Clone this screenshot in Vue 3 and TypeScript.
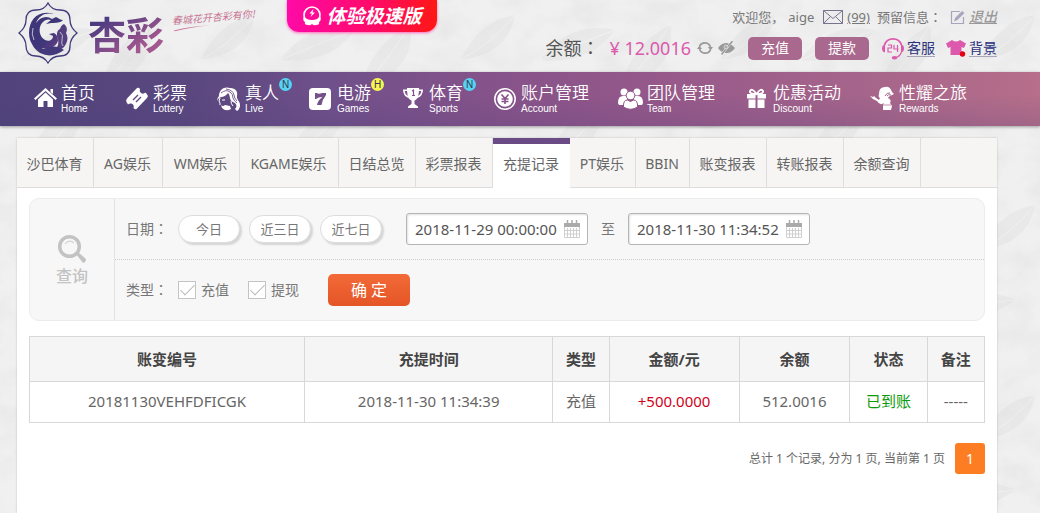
<script setup lang="ts">
import { ref } from 'vue'

interface NavItem {
  icon: string
  label: string
  sub: string
  badge?: 'N' | 'H'
}

const navItems: NavItem[] = [
  { icon: 'home', label: '首页', sub: 'Home' },
  { icon: 'lottery', label: '彩票', sub: 'Lottery' },
  { icon: 'live', label: '真人', sub: 'Live', badge: 'N' },
  { icon: 'games', label: '电游', sub: 'Games', badge: 'H' },
  { icon: 'sports', label: '体育', sub: 'Sports', badge: 'N' },
  { icon: 'account', label: '账户管理', sub: 'Account' },
  { icon: 'team', label: '团队管理', sub: 'Team' },
  { icon: 'discount', label: '优惠活动', sub: 'Discount' },
  { icon: 'rewards', label: '性耀之旅', sub: 'Rewards' },
]

const tabs: string[] = [
  '沙巴体育', 'AG娱乐', 'WM娱乐', 'KGAME娱乐', '日结总览', '彩票报表',
  '充提记录', 'PT娱乐', 'BBIN', '账变报表', '转账报表', '余额查询',
]
const activeTab = ref('充提记录')

const ranges: string[] = ['今日', '近三日', '近七日']
const startDate = ref('2018-11-29 00:00:00')
const endDate = ref('2018-11-30 11:34:52')
const deposit = ref(true)
const withdraw = ref(true)

const columns: string[] = ['账变编号', '充提时间', '类型', '金额/元', '余额', '状态', '备注']
const records = [
  {
    id: '20181130VEHFDFICGK',
    time: '2018-11-30 11:34:39',
    type: '充值',
    amount: '+500.0000',
    balance: '512.0016',
    status: '已到账',
    note: '-----',
  },
]
</script>

<template>
  <div class="page">
    <svg class="texture" aria-hidden="true">
      <defs>
        <filter id="grain" x="0" y="0" width="100%" height="100%">
          <feTurbulence type="fractalNoise" baseFrequency="0.03 0.04" numOctaves="4" seed="8" />
          <feColorMatrix values="0 0 0 0 0.7  0 0 0 0 0.7  0 0 0 0 0.7  0.7 0 0 0 -0.26" />
        </filter>
        <pattern id="leaves" width="260" height="190" patternUnits="userSpaceOnUse">
          <g fill="#e2e2e2" opacity="0.5">
            <path d="M20 60 Q50 20 95 30 Q70 65 20 60Z" />
            <path d="M100 90 Q110 45 150 25 Q158 70 100 90Z" />
            <path d="M150 120 Q190 90 235 110 Q195 140 150 120Z" />
            <path d="M30 160 Q40 115 85 110 Q78 150 30 160Z" />
            <path d="M200 60 Q220 20 255 15 Q248 55 200 60Z" />
          </g>
          <path d="M20 60 Q55 45 95 30 M100 90 Q125 65 150 25 M150 120 Q190 115 235 110 M30 160 Q55 140 85 110 M200 60 Q230 45 255 15" stroke="#f6f6f6" fill="none" opacity="0.7" />
        </pattern>
      </defs>
      <rect width="100%" height="100%" fill="url(#leaves)" />
      <rect width="100%" height="100%" filter="url(#grain)" />
    </svg>

    <header class="header">
      <a class="brand" href="#" aria-label="杏彩">
        <svg class="emblem" viewBox="0 0 60 62">
          <defs>
            <linearGradient id="emblemFill" x1="0" y1="0" x2="1" y2="1">
              <stop offset="0" stop-color="#3c3678" />
              <stop offset="0.6" stop-color="#40367a" />
              <stop offset="1" stop-color="#80458a" />
            </linearGradient>
          </defs>
          <path
            d="M30 1C33 7 38 8 42 8C49 8 52 12 52 18C52 23 54 27 59 31C54 35 52 39 52 44C52 50 49 54 42 54C38 54 33 56 30 61C27 56 22 54 18 54C11 54 8 50 8 44C8 39 6 35 1 31C6 27 8 23 8 18C8 12 11 8 18 8C22 8 27 7 30 1Z"
            fill="none" stroke="#413a7b" stroke-width="1.3" />
          <path
            d="M36 12C20 7 11 18 11 31C11 43 20 52 31 51C27 49 25 48 24 46C33 48 38 44 40 39C40 35 39 33 36 31L31 32L35 34C35 38 31 40 27 38C21 35 20 26 24 21C27 17 31 17 33 18L28 22C35 20 42 22 45 18C42 18 41 16 38 15L34 17C29 13 22 15 18 21C21 13 28 10 36 12Z"
            fill="url(#emblemFill)" />
          <path d="M46 22C50 25 49 29 48 31C51 36 49 42 45 46C42 48 39 48 37 48C40 45 41 41 40 37C38 33 39 28 42 27C43 24 44 23 46 22Z" fill="#54407f" />
          <path d="M14 42Q20 50 31 45Q39 43 46 48Q34 57 22 51Q17 48 14 42Z" fill="#443a7b" />
          <path d="M42 30Q46 33 44 38Q43 42 45 44M15 26Q13 32 16 38" stroke="#ddd8e6" stroke-width=".8" fill="none" />
        </svg>
        <span class="brand-name">杏彩</span>
        <span class="slogan">
          <span>春城花开杏彩有你!</span>
          <svg viewBox="0 0 40 4"><path d="M1 3Q18 0 39 1Q18 1 1 4Z" fill="#cc7798" /></svg>
        </span>
      </a>

      <a class="promo" href="#">
        <svg viewBox="0 0 20 20">
          <circle cx="10" cy="9" r="8" fill="none" stroke="#fff" stroke-width="1.6" />
          <path d="M2 10Q4 14 10 14Q16 14 18 10Q20 14 17 16Q18 19 14 19Q12 20 10 18Q8 20 6 19Q2 19 3 16Q0 14 2 10Z" fill="#fff" />
          <path d="M11.500 3L7.500 7.500H10L8.500 11L13 6.500H10.500Z" fill="#fff" />
        </svg>
        <span>体验极速版</span>
      </a>

      <div class="account">
        <div class="account-row welcome">
          <span>欢迎您，</span>
          <span class="user">aige</span>
          <a class="mail" href="#">
            <svg viewBox="0 0 20 14" fill="none" stroke="#7a7390">
              <path d="M.5.5H19.5V13.5H.5ZM.5.5L10 8.5L19.5.5M.5 13.5L7.5 6.5M19.5 13.5L12.5 6.5" />
            </svg>
            <u>(99)</u>
          </a>
          <span class="message">预留信息<span class="colon">：</span></span>
          <button class="icon-button" type="button" aria-label="编辑">
            <svg class="edit" viewBox="0 0 15 15">
              <path d="M10 1.5H1.500V13.500H13.500V7" fill="none" stroke="#aaa5bf" stroke-width="1.2" />
              <path d="M4 11.500L5 8L12 1L14.500 3L7.500 10Z" fill="#aaa5bf" />
            </svg>
          </button>
          <a class="logout" href="#">退出</a>
        </div>
        <div class="account-row">
          <span class="balance-label">余额<span class="colon">：</span></span>
          <span class="balance">¥ 12.0016</span>
          <button class="icon-button" type="button" aria-label="刷新">
            <svg class="refresh" viewBox="0 0 16 14">
              <path d="M2.500 5A6 6 0 0 1 13.500 6M13.500 9A6 6 0 0 1 2.500 8" fill="none" stroke="#999" stroke-width="1.600" />
              <path d="M11 6H16L13.500 9.500ZM0 8H5L2.500 4.500Z" fill="#999" />
            </svg>
          </button>
          <button class="icon-button eye-button" type="button" aria-label="隐藏余额">
            <svg class="eye" viewBox="0 0 17 14">
              <path d="M0 7Q3.500 2 8.500 2Q10 2 11 2.500L4 11Q1.500 9.500 0 7ZM13 3.500Q15.500 5 17 7Q13.500 12 8.500 12Q7.500 12 6.500 11.700Z" fill="#999" />
              <path d="M14.500 0L3.500 13.500" stroke="#999" stroke-width="1.500" />
              <circle cx="8" cy="6" r="2" fill="none" stroke="#e9e9e9" stroke-width=".8" />
            </svg>
          </button>
          <button class="pill-action" type="button">充值</button>
          <button class="pill-action" type="button">提款</button>
          <a class="service" href="#">
            <svg class="headset" viewBox="0 0 22 23">
              <path d="M2.500 8A9 9 0 0 1 19.500 8" fill="none" stroke="#dd59ad" stroke-width="1.800" />
              <path d="M3 7.500Q0 8 0 11.500Q0 15 3 15.500ZM19 7.500Q22 8 22 11.500Q22 15 19 15.500Z" fill="#dd59ad" />
              <path d="M19.500 15Q18 19.500 14 20.500" fill="none" stroke="#dd59ad" stroke-width="1.200" />
              <ellipse cx="12.500" cy="20.800" rx="2.800" ry="1.800" fill="#dd59ad" />
              <path d="M6 8H9.500V11H6V15H10M12 8V12H16.500M15.500 8V15" fill="none" stroke="#dd59ad" stroke-width="1.200" />
            </svg>
            <span>客服</span>
          </a>
          <a class="service" href="#">
            <svg class="shirt" viewBox="0 0 20 17">
              <path d="M6 0Q10 3 14 0L20 3.500L18 8L15.500 7V15H4.500V7L2 8L0 3.500Z" fill="#dd59ad" />
              <circle cx="16.500" cy="14" r="2.700" fill="#e50012" />
            </svg>
            <span>背景</span>
          </a>
        </div>
      </div>
    </header>

    <nav class="nav">
      <a v-for="item in navItems" :key="item.sub" class="nav-item" href="#">
        <svg class="nav-icon" viewBox="0 0 25 25">
          <g v-if="item.icon === 'home'">
            <path d="M13.500 2L25 12.500L23.500 14L13.500 5L3.500 14L2 12.500ZM18.500 3H21V8L18.500 6Z" fill="#fff" />
            <path d="M13.500 6.500L21 13.500V21H15.500V15H11.500V21H6V13.500Z" fill="#fff" />
          </g>
          <g v-else-if="item.icon === 'lottery'">
            <path d="M13 2Q14.500 1 16 3Q15 6 18 7.500Q20 8 21.500 6.500L23.500 9Q24.500 10.500 23 12L12.500 23Q11 24 9.500 22Q10.500 18.500 7.500 17.500Q5.500 17 4 18.500L2.500 16Q1.500 14.500 3 12.500Z" fill="#fff" />
            <path d="M9 14L14 9M12 16L17 11" stroke="#624b84" stroke-width="1.400" />
          </g>
          <g v-else-if="item.icon === 'live'" fill="none" stroke="#fff">
            <path d="M3 10C3 3 9 0 14 2C20 2 22 6 21 10C20 13 24 15 24 19Q24 23 21 25Q20 24 19 23Q22 20 19 17Q14 15 14 12Q14 9 12 7Q9 11 5 11Q2 12 1 15Q1 12 3 10Z" fill="#fff" stroke="none" />
            <path d="M5 7Q10 3 14 6Q17 8 17 12Q18 15 21 17M10 3Q17 4 18 9Q18 12 21 15" stroke="#71518a" stroke-width=".9" />
            <path d="M4 12L3 15L4 17V19M6 14H9M15 15Q15 18 17 20" />
            <path d="M5 19Q7 21 9 19L14 20L15 23Q10 26 6 22Z" fill="#fff" stroke="none" />
          </g>
          <g v-else-if="item.icon === 'games'">
            <rect x="1" y="2" width="22" height="22" rx="4" fill="#fff" />
            <path d="M7 7H8.500Q11 8.500 14 7H18V9Q14 14 13.500 19H9Q10 14 14.500 11Q10 11 8 13H7Z" fill="#745189" />
          </g>
          <g v-else-if="item.icon === 'sports'">
            <path d="M7 2H19V3.500H23Q23 10 17.500 12Q16 14 14.500 14.500V18L18 20.500V22H8V20.500L11.500 18V14.500Q10 14 8.500 12Q3 10 3 3.500H7ZM4.700 5Q5 8.500 7.700 10L7 5ZM21.300 5H19L18.300 10Q21 8.500 21.300 5Z" fill="#fff" />
            <path d="M12 5L13.500 4V9.500M12 9.500H15" stroke="#80528a" stroke-width="1.200" fill="none" />
          </g>
          <g v-else-if="item.icon === 'account'">
            <circle cx="13" cy="13" r="10.200" fill="none" stroke="#fff" stroke-width="1.500" />
            <circle cx="13" cy="13" r="7.800" fill="#fff" />
            <path d="M9.500 8.500L13 12.500L16.500 8.500M13 12V18M9.500 13H16.500M9.500 15.500H16.500" fill="none" stroke="#89538a" stroke-width="1.600" />
          </g>
          <g v-else-if="item.icon === 'team'" fill="#fff">
            <circle cx="6" cy="6" r="3.500" /><circle cx="19" cy="6" r="3.500" />
            <path d="M0 17Q0 10 5 10H9V19H1ZM25 17Q25 10 20 10H16V19H24Z" />
            <g stroke="#925788" stroke-width="1">
              <circle cx="12.500" cy="9.500" r="4.300" />
              <path d="M5.500 21Q5 14 9.500 14L12.500 15.500L15.500 14Q20 14 19.500 21Q12.500 25.500 5.500 21Z" />
            </g>
          </g>
          <g v-else-if="item.icon === 'discount'">
            <path d="M12.500 8Q5 8 6 5Q8 1.500 12.500 8Q17 1.500 19 5Q20 8 12.500 8Z" fill="none" stroke="#fff" stroke-width="1.800" />
            <path d="M3 8H11.500V12.500H3ZM13.500 8H22V12.500H13.500ZM4.500 13.500H11.500V22H4.500ZM13.500 13.500H20.500V22H13.500Z" fill="#fff" />
          </g>
          <g v-else fill="#fff">
            <path d="M9 8Q9 1 15 1Q20 0 22 6L24 8L20 10Q18 11 18 12Q22 14 20 17L22 20L21 24H13L13 19L14 17Q10 20 7 15L3 13L0 10L3 11L4 10L6 12L9 14L10 12Q8 11 9 8Z" />
            <path d="M15 10Q17 6 20 7M17 10Q18 8 21 9" fill="none" stroke="#a7668a" />
            <path d="M13 19H21" stroke="#a7668a" stroke-width=".7" />
          </g>
        </svg>
        <span class="nav-text">
          <span class="nav-label">{{ item.label }}</span>
          <span class="nav-sub">{{ item.sub }}</span>
        </span>
        <span v-if="item.badge" class="badge" :class="{ hot: item.badge === 'H' }">{{ item.badge }}</span>
      </a>
    </nav>

    <main class="panel">
      <div class="tabs" role="tablist">
        <button
          v-for="tab in tabs" :key="tab" type="button" role="tab" class="tab"
          :class="{ active: tab === activeTab }" :aria-selected="tab === activeTab" @click="activeTab = tab"
        >{{ tab }}</button>
      </div>

      <div class="content">
        <form class="filter" @submit.prevent>
          <div class="filter-title">
            <svg viewBox="0 0 30 30">
              <circle cx="12.500" cy="12.500" r="9.800" fill="none" stroke="#c3c3c3" stroke-width="3.500" />
              <path d="M8 10Q12 5 17 9" fill="none" stroke="#d2d2d2" stroke-width="1.200" />
              <path d="M19 20L21 18L29 25Q29 28 26 29Z" fill="#c3c3c3" />
            </svg>
            <span>查询</span>
          </div>
          <div class="filter-rows">
            <div class="filter-row">
              <span class="field-label">日期<span class="colon">：</span></span>
              <div class="ranges">
                <button v-for="range in ranges" :key="range" type="button" class="range">{{ range }}</button>
              </div>
              <div class="date-fields">
                <div class="date-box">
                  <input v-model="startDate" type="text" aria-label="开始日期" />
                  <svg viewBox="0 0 16 18"><path d="M0 3H16V7H0Z" fill="#aaa" /><path d="M3.500 0V5M8 0V5M12.500 0V5" stroke="#aaa" stroke-width="1.500" /><path d="M.500 7V17.500H15.500V7M3.500 8V17M6.500 8V17M9.500 8V17M12.500 8V17M1 10.500H15M1 14H15" fill="none" stroke="#d0d0d0" /></svg>
                </div>
                <span>至</span>
                <div class="date-box">
                  <input v-model="endDate" type="text" aria-label="结束日期" />
                  <svg viewBox="0 0 16 18"><path d="M0 3H16V7H0Z" fill="#aaa" /><path d="M3.500 0V5M8 0V5M12.500 0V5" stroke="#aaa" stroke-width="1.500" /><path d="M.500 7V17.500H15.500V7M3.500 8V17M6.500 8V17M9.500 8V17M12.500 8V17M1 10.500H15M1 14H15" fill="none" stroke="#d0d0d0" /></svg>
                </div>
              </div>
            </div>
            <div class="filter-row">
              <span class="field-label">类型<span class="colon">：</span></span>
              <div class="checks">
                <label><input v-model="deposit" type="checkbox" />充值</label>
                <label><input v-model="withdraw" type="checkbox" />提现</label>
              </div>
              <button class="confirm" type="submit">确 定</button>
            </div>
          </div>
        </form>

        <table class="records">
          <colgroup>
            <col v-for="(column, index) in columns" :key="column" :class="'col-' + index" />
          </colgroup>
          <thead>
            <tr><th v-for="column in columns" :key="column" scope="col">{{ column }}</th></tr>
          </thead>
          <tbody>
            <tr v-for="record in records" :key="record.id">
              <td>{{ record.id }}</td>
              <td>{{ record.time }}</td>
              <td>{{ record.type }}</td>
              <td class="amount">{{ record.amount }}</td>
              <td>{{ record.balance }}</td>
              <td class="done">{{ record.status }}</td>
              <td>{{ record.note }}</td>
            </tr>
          </tbody>
        </table>

        <div class="pager">
          <span>总计 1 个记录, 分为 1 页, 当前第 1 页</span>
          <button type="button" aria-current="page">1</button>
        </div>
      </div>
    </main>
  </div>
</template>

<style>
body {
  background: #f0f0f0;
}
</style>

<style scoped>
.page {
  position: relative;
  display: flex;
  flex-direction: column;
  box-sizing: border-box;
  min-height: 100vh;
  color: #666;
  font-family: "Noto Sans", "Noto Sans CJK SC", sans-serif;
  font-size: 14px;
  line-height: 20px;
}

.page *,
.page *::after {
  box-sizing: border-box;
}

button,
input {
  margin: 0;
  padding: 0;
  font: inherit;
  color: inherit;
}

button {
  border: 0;
  background: none;
  cursor: pointer;
}

a {
  color: inherit;
  text-decoration: none;
}

svg {
  display: block;
  flex: none;
}

.colon {
  font-family: "Noto Sans CJK JP", sans-serif;
  line-height: 1;
}

.texture {
  position: absolute;
  inset: 0;
  width: 100%;
  height: 100%;
}

.header,
.nav,
.panel {
  position: relative;
}

.header {
  display: flex;
  height: 72px;
  padding: 0 43px 0 18px;
}

.brand {
  display: flex;
  align-items: flex-start;
  width: 269px;
}

.emblem {
  width: 60px;
  height: 62px;
  margin-top: 2px;
}

.brand-name {
  margin: 9px 0 0 10px;
  background: linear-gradient(150deg, #4b3a80 20%, #a2578f 75%);
  background-clip: text;
  color: transparent;
  font-family: "Noto Sans CJK SC", sans-serif;
  font-size: 38px;
  font-weight: 700;
  line-height: 48px;
}

.slogan {
  margin: 10px 0 0 8px;
  color: #c77492;
  font-family: "Noto Sans CJK SC", sans-serif;
  font-size: 10px;
  font-style: italic;
  line-height: 14px;
  white-space: nowrap;
  transform: rotate(-5deg);
}

.slogan svg {
  width: 40px;
  height: 4px;
}

.promo {
  display: flex;
  justify-content: center;
  align-items: center;
  gap: 4px;
  width: 150px;
  height: 32px;
  border-radius: 0 0 12px 12px;
  background: linear-gradient(90deg, #ff0aa7, #ff0b65 60%, #ff1713);
  box-shadow: 0 1px 3px #ff65bd;
  color: #fff;
  font-size: 19px;
  font-style: italic;
  font-weight: 700;
  line-height: 28px;
}

.promo svg {
  width: 20px;
  height: 20px;
}

.account {
  display: flex;
  flex-direction: column;
  align-items: flex-end;
  gap: 9px;
  margin-left: auto;
  padding-top: 7px;
}

.account-row {
  display: flex;
  align-items: center;
  height: 24px;
  white-space: nowrap;
}

.welcome {
  height: 20px;
  color: #777;
  font-size: 13px;
}

.user {
  margin: 0 9px 0 4px;
}

.mail {
  display: flex;
  align-items: center;
  gap: 4px;
}

.mail svg {
  width: 20px;
  height: 14px;
}

.message {
  margin: 0 8px 0 7px;
}

.edit {
  width: 15px;
  height: 15px;
}

.logout {
  margin-left: 4px;
  color: #999;
  font-size: 14px;
  font-style: italic;
  font-weight: 500;
  text-decoration: underline;
}

.balance-label,
.balance {
  font-size: 18px;
  line-height: 24px;
}

.balance-label {
  color: #555;
  margin-right: 10px;
}

.balance {
  color: #dc5aae;
  margin-right: 6px;
}

.refresh {
  width: 16px;
  height: 14px;
}

.eye-button {
  margin: 0 13px 0 5px;
}

.eye {
  width: 17px;
  height: 14px;
}

.pill-action {
  width: 54px;
  height: 23px;
  margin-right: 13px;
  border-radius: 5px;
  background: #a9688e;
  color: #fff;
  line-height: 22px;
}

.service {
  display: flex;
  align-items: center;
  gap: 3px;
  color: #29317c;
}

.service + .service {
  margin-left: 11px;
}

.service span {
  border-bottom: 1px solid #a9a4b8;
  line-height: 16px;
}

.headset {
  width: 22px;
  height: 23px;
}

.shirt {
  width: 20px;
  height: 17px;
}

.nav {
  display: flex;
  height: 54px;
  padding-left: 32px;
  background:
    linear-gradient(180deg, transparent 40%, rgba(70, 60, 120, 0.18)),
    linear-gradient(95deg, #51437b 0%, #5a477f 18%, #70508a 32%, #83528a 45%, #95588a 62%, #a3638b 80%, #b76f8a 100%);
  box-shadow: 0 1px 3px rgba(0, 0, 0, 0.35);
  color: #fff;
}

.nav-item {
  position: relative;
  display: flex;
  gap: 4px;
  margin-right: 29px;
  padding-top: 10px;
}

.nav-icon {
  width: 25px;
  height: 25px;
  margin-top: 4px;
}

.nav-text {
  display: flex;
  flex-direction: column;
  white-space: nowrap;
}

.nav-label {
  font-family: "Noto Sans CJK SC", sans-serif;
  font-size: 17px;
  font-weight: 350;
  line-height: 20px;
}

.nav-sub {
  font-family: "Liberation Sans", Arial, sans-serif;
  font-size: 10px;
  line-height: 14px;
}

.badge {
  position: absolute;
  top: 6px;
  right: -13px;
  width: 13px;
  height: 13px;
  border-radius: 50%;
  background: #57d3f1;
  color: #343657;
  font-family: "Liberation Sans", Arial, sans-serif;
  font-size: 10px;
  line-height: 13px;
  text-align: center;
}

.badge.hot {
  background: #f7f552;
}

.panel {
  flex: 1;
  margin: 12px 43px 0 17px;
  background: #fff;
  box-shadow: 0 0 2px rgba(0, 0, 0, 0.2);
}

.tabs {
  display: grid;
  grid-template-columns: 77px 69px 77px 99px 77px 77px 77px 66px 54px 77px 77px 77px;
  height: 50px;
  border-bottom: 1px solid #ddd;
  background: #f6f5f3;
}

.tab {
  padding: 2px 1px 0 0;
  border-right: 1px solid #ddd;
  white-space: nowrap;
}

.tab.active {
  height: 50px;
  padding: 0 1px 5px 0;
  border-top: 6px solid #6b4b86;
  border-right: 0;
  background: #fff;
}

.content {
  padding: 10px 12px 0;
}

.filter {
  display: flex;
  height: 123px;
  border: 1px solid #ececec;
  border-radius: 10px;
  background: #f7f7f7;
  color: #777;
}

.filter-title {
  display: flex;
  flex-direction: column;
  align-items: center;
  gap: 2px;
  width: 85px;
  padding-top: 35px;
  border-right: 1px solid #e3e3e3;
  color: #c3c3c3;
  font-size: 16px;
  font-weight: 500;
}

.filter-title svg {
  width: 30px;
  height: 30px;
}

.filter-rows {
  flex: 1;
}

.filter-row {
  display: flex;
  align-items: center;
  height: 60px;
  padding-left: 11px;
}

.filter-row:first-child {
  height: 61px;
  border-bottom: 1px dotted #ccc;
}

.field-label {
  width: 52px;
}

.ranges {
  display: flex;
  gap: 9px;
}

.range {
  width: 62px;
  height: 28px;
  border: 1px solid #ddd;
  border-radius: 14px;
  background: #fff;
  box-shadow: 2px 2px 2px rgba(0, 0, 0, 0.14);
  font-size: 13px;
}

.date-fields {
  display: flex;
  align-items: center;
  gap: 13px;
  margin-left: 24px;
}

.date-box {
  display: flex;
  align-items: center;
  width: 182px;
  height: 32px;
  padding: 0 7px 0 8px;
  border: 1px solid #b5b5b5;
  border-radius: 3px;
  background: #fff;
  box-shadow: inset 1px 1px 2px rgba(0, 0, 0, 0.12);
}

.date-box input {
  flex: 1;
  min-width: 0;
  border: 0;
  outline: 0;
  background: none;
  color: #555;
  font-size: 15px;
}

.date-box svg {
  width: 16px;
  height: 18px;
}

.checks {
  display: flex;
  gap: 19px;
}

.checks label {
  display: flex;
  align-items: center;
  gap: 5px;
}

.checks input {
  position: relative;
  width: 18px;
  height: 18px;
  border: 1px solid #c4c4c4;
  background: #fff;
  appearance: none;
}

.checks input:checked::after {
  position: absolute;
  top: -1px;
  left: 5px;
  width: 7px;
  height: 14px;
  border: solid #bbb;
  border-width: 0 1px 1px 0;
  content: "";
  transform: rotate(45deg);
}

.confirm {
  width: 82px;
  height: 32px;
  margin-left: 29px;
  border-radius: 5px;
  background: linear-gradient(#f36a38, #e45526);
  color: #fff;
  font-size: 16px;
}

.records {
  width: 100%;
  margin-top: 15px;
  border-collapse: collapse;
  table-layout: fixed;
  font-size: 15px;
  text-align: center;
}

.records th,
.records td {
  height: 41px;
  padding: 0;
  border: 1px solid #d8d8d8;
}

.records td {
  padding-bottom: 2px;
}

.records th {
  height: 45px;
  background: #f5f5f5;
  color: #444;
}

.col-0 { width: 28.8%; }
.col-1 { width: 26%; }
.col-2 { width: 5.9%; }
.col-3 { width: 13.6%; }
.col-4 { width: 11.6%; }
.col-5 { width: 8.1%; }
.col-6 { width: 6%; }

.records .amount {
  color: #d0021b;
}

.records .done {
  color: #0a9a0a;
}

.pager {
  display: flex;
  justify-content: flex-end;
  align-items: center;
  gap: 10px;
  margin-top: 20px;
  font-size: 12px;
}

.pager button {
  width: 30px;
  height: 31px;
  border-radius: 3px;
  background: #fd7e22;
  color: #fff;
  font-size: 14px;
}
</style>
